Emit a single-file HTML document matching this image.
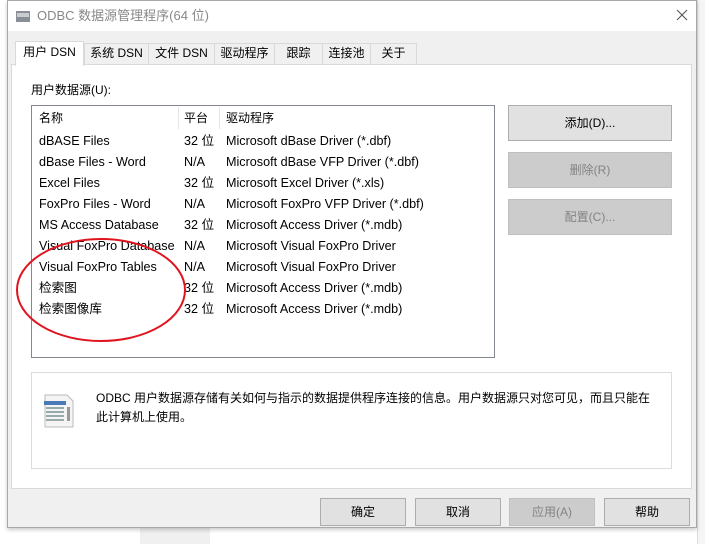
<!DOCTYPE html>
<html><head><meta charset="utf-8"><style>
*{margin:0;padding:0;box-sizing:border-box}
body{width:705px;height:544px;position:relative;background:#fff;font-family:"Liberation Sans","Noto Sans CJK SC",sans-serif;font-size:12px;color:#000;overflow:hidden}
.a{position:absolute}
.t{position:absolute;white-space:nowrap;line-height:16px}
.btn{position:absolute;background:#e1e1e1;border:1px solid #adadad;text-align:center;font-size:12px}
.dis{background:#cccccc;border-color:#bfbfbf;color:#838383}
.tab{position:absolute;top:43px;height:21px;border:1px solid #d9d9d9;border-bottom:none;background:#f0f0f0;text-align:center;line-height:19px;font-size:12px}
</style></head><body>
<div class="a" style="left:0;top:0;width:8px;height:544px;background:#fff"></div>
<div class="a" style="left:697px;top:0;width:8px;height:544px;background:#f5f5f5;border-left:1px solid #ddd"></div>
<div class="a" style="left:140px;top:527px;width:70px;height:17px;background:#f0f0f0"></div>
<div class="a" style="left:7px;top:0;width:690px;height:528px;background:#f0f0f0;border:1px solid #a8a8a8;box-shadow:0 2px 4px rgba(0,0,0,.2)"></div>
<div class="a" style="left:8px;top:1px;width:688px;height:30px;background:#fff"></div>
<svg class="a" style="left:15px;top:8px" width="16" height="16"><rect x="1" y="3" width="14" height="11" fill="#8a8f96"/><rect x="2" y="5" width="12" height="4" fill="#c9ccd0"/></svg>
<div class="t" style="left:37px;top:8px;font-size:13px;color:#888">ODBC 数据源管理程序(64 位)</div>
<svg class="a" style="left:676px;top:9px" width="12" height="12"><path d="M1 1L11 11M11 1L1 11" stroke="#555" stroke-width="1.1"/></svg>
<div class="tab" style="left:84px;width:65px">系统 DSN</div>
<div class="tab" style="left:148px;width:67px">文件 DSN</div>
<div class="tab" style="left:214px;width:61px">驱动程序</div>
<div class="tab" style="left:274px;width:49px">跟踪</div>
<div class="tab" style="left:322px;width:49px">连接池</div>
<div class="tab" style="left:370px;width:47px">关于</div>
<div class="a" style="left:11px;top:64px;width:681px;height:425px;background:#fff;border:1px solid #d9d9d9"></div>
<div class="tab" style="left:15px;top:41px;width:69px;height:25px;background:#fff;border-color:#d9d9d9;line-height:20px">用户 DSN</div>
<div class="t" style="left:31px;top:82px">用户数据源(U):</div>
<div class="a" style="left:31px;top:105px;width:464px;height:253px;border:1px solid #828790;background:#fff"></div>
<div class="a" style="left:178px;top:107px;width:1px;height:22px;background:#e5e5e5"></div>
<div class="a" style="left:219px;top:107px;width:1px;height:22px;background:#e5e5e5"></div>
<div class="t" style="left:39px;top:110px">名称</div><div class="t" style="left:184px;top:110px">平台</div><div class="t" style="left:226px;top:110px">驱动程序</div>
<div style="position:absolute;left:0;top:133px;font-size:12.6px">
<div class="t" style="left:39px;top:0">dBASE Files</div><div class="t" style="left:184px;top:0">32 位</div><div class="t" style="left:226px;top:0">Microsoft dBase Driver (*.dbf)</div>
<div class="t" style="left:39px;top:21px">dBase Files - Word</div><div class="t" style="left:184px;top:21px">N/A</div><div class="t" style="left:226px;top:21px">Microsoft dBase VFP Driver (*.dbf)</div>
<div class="t" style="left:39px;top:42px">Excel Files</div><div class="t" style="left:184px;top:42px">32 位</div><div class="t" style="left:226px;top:42px">Microsoft Excel Driver (*.xls)</div>
<div class="t" style="left:39px;top:63px">FoxPro Files - Word</div><div class="t" style="left:184px;top:63px">N/A</div><div class="t" style="left:226px;top:63px">Microsoft FoxPro VFP Driver (*.dbf)</div>
<div class="t" style="left:39px;top:84px">MS Access Database</div><div class="t" style="left:184px;top:84px">32 位</div><div class="t" style="left:226px;top:84px">Microsoft Access Driver (*.mdb)</div>
<div class="t" style="left:39px;top:105px">Visual FoxPro Database</div><div class="t" style="left:184px;top:105px">N/A</div><div class="t" style="left:226px;top:105px">Microsoft Visual FoxPro Driver</div>
<div class="t" style="left:39px;top:126px">Visual FoxPro Tables</div><div class="t" style="left:184px;top:126px">N/A</div><div class="t" style="left:226px;top:126px">Microsoft Visual FoxPro Driver</div>
<div class="t" style="left:39px;top:147px">检索图</div><div class="t" style="left:184px;top:147px">32 位</div><div class="t" style="left:226px;top:147px">Microsoft Access Driver (*.mdb)</div>
<div class="t" style="left:39px;top:168px">检索图像库</div><div class="t" style="left:184px;top:168px">32 位</div><div class="t" style="left:226px;top:168px">Microsoft Access Driver (*.mdb)</div>
</div>
<svg class="a" style="left:0;top:0" width="705" height="544"><ellipse cx="101" cy="290" rx="84" ry="51" fill="none" stroke="#e0141e" stroke-width="2"/></svg>
<div class="btn" style="left:508px;top:105px;width:164px;height:36px;line-height:34px">添加(D)...</div>
<div class="btn dis" style="left:508px;top:152px;width:164px;height:36px;line-height:34px">删除(R)</div>
<div class="btn dis" style="left:508px;top:199px;width:164px;height:36px;line-height:34px">配置(C)...</div>
<div class="a" style="left:31px;top:372px;width:641px;height:97px;border:1px solid #dcdcdc"></div>
<svg class="a" style="left:43px;top:393px" width="32" height="36"><path d="M2 2h22l6 6v26H2z" fill="#f4f4f4" stroke="#bbb"/><rect x="1" y="8" width="22" height="4" fill="#4a78b8"/><g fill="#9aa"><rect x="3" y="14" width="18" height="2"/><rect x="3" y="18" width="18" height="2"/><rect x="3" y="22" width="18" height="2"/><rect x="3" y="26" width="18" height="2"/></g><rect x="24" y="14" width="3" height="14" fill="#999"/></svg>
<div class="t" style="left:96px;top:389px;line-height:19px">ODBC 用户数据源存储有关如何与指示的数据提供程序连接的信息。用户数据源只对您可见，而且只能在<br>此计算机上使用。</div>
<div class="btn" style="left:320px;top:498px;width:86px;height:28px;line-height:26px">确定</div>
<div class="btn" style="left:415px;top:498px;width:86px;height:28px;line-height:26px">取消</div>
<div class="btn dis" style="left:509px;top:498px;width:86px;height:28px;line-height:26px">应用(A)</div>
<div class="btn" style="left:604px;top:498px;width:86px;height:28px;line-height:26px">帮助</div>
</body></html>
